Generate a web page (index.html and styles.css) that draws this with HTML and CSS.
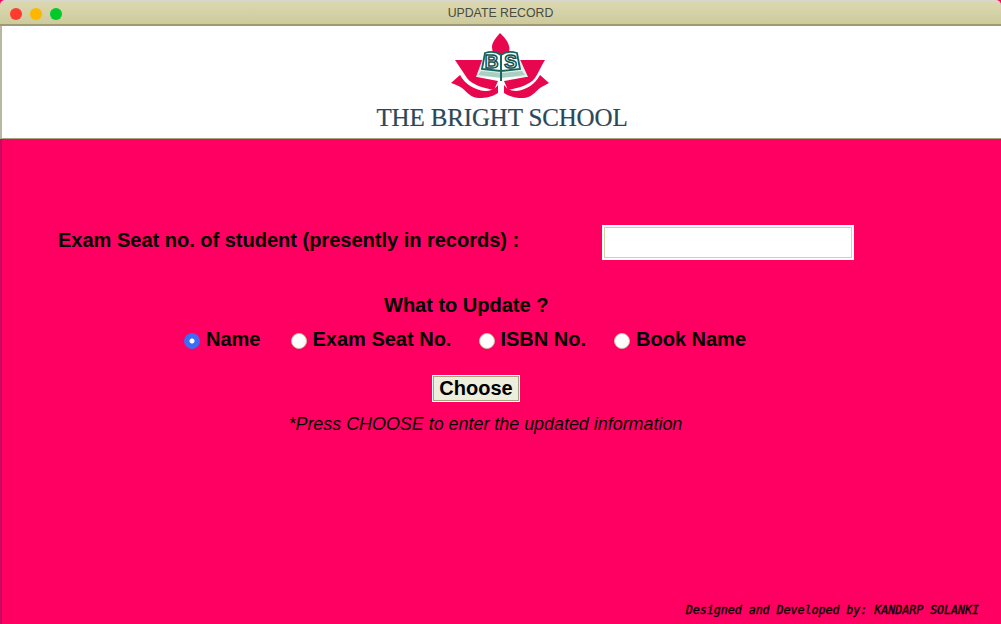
FILE: index.html
```html
<!DOCTYPE html>
<html lang="en">

<head>
    <meta charset="UTF-8">
    <meta name="viewport" content="width=device-width, initial-scale=1.0">
    <title>Update Record</title>
    <link rel="stylesheet" href="styles.css">
</head>

<body>
    <div class="titlebar">
        <div class="traffic">
            <span class="light red"></span>
            <span class="light yellow"></span>
            <span class="light green"></span>
        </div>
        <div class="title-text">UPDATE RECORD</div>
    </div>

    <header class="banner">
        <svg class="logo-mark" width="102" height="68" viewBox="450 32 102 68">
            <path fill="#e8064f" d="M500 33 C496 38 492 42 492 47 C492 50 493 52 494 54 L508 54 C509 52 510 49 509 46 C508 41 504 37 500 33 Z" />
            <path fill="#e8064f" d="M455 60 L483 60 L477 77 L498 81 L494 90 C484 88 472 85 467 78 C463 72 459 66 455 60 Z" />
            <path fill="#e8064f" d="M545 60 L519 60 L526 77 L504 81 L508 90 C518 88 530 85 535 78 C539 72 541 66 545 60 Z" />
            <path fill="#e8064f" d="M451 83 L460 75 C465 84 474 90 485 91 C490 91 495 89 498 85 L498 93 C492 97 486 98 479 98 C471 98 467 92 462 88 C459 86 455 84 451 83 Z" />
            <path fill="#e8064f" d="M549 83 L540 75 C535 84 527 90 516 91 C511 91 507 89 504 85 L504 93 C510 97 516 98 523 98 C531 98 535 92 540 88 C543 86 547 84 549 83 Z" />
            <path fill="#e4f1ea" d="M484 55 L518 55 L528 77 L476 77 Z" />
            <path fill="#ffffff" stroke="#17655e" stroke-width="1.8" d="M485 53 C491 51 497 52 501 55 C505 52 511 51 517 53 L520 69 L501 71 L482 69 Z" />
            <path fill="#a9cfc2" d="M481 71 L501 73 L522 71 L525 75 L501 78 L478 75 Z" />
            <path stroke="#17655e" stroke-width="2" fill="none" d="M501 55 L501 81" />
            <text class="logo-letters" x="491.5" y="68" text-anchor="middle">B</text>
            <text class="logo-letters" x="510.5" y="68" text-anchor="middle">S</text>
        </svg>
        <div class="school-name">THE BRIGHT SCHOOL</div>
    </header>

    <main class="content">
        <form class="update-form">
            <div class="seat-row">
                <label class="seat-label" for="seat">Exam Seat no. of student (presently in records) :</label>
                <div class="input-frame">
                    <input type="text" id="seat" name="seat" autocomplete="off">
                </div>
            </div>

            <div class="what-title">What to Update ?</div>

            <div class="radio-row">
                <label class="radio-item first"><input type="radio" name="field" checked>Name</label>
                <label class="radio-item"><input type="radio" name="field">Exam Seat No.</label>
                <label class="radio-item"><input type="radio" name="field">ISBN No.</label>
                <label class="radio-item"><input type="radio" name="field">Book Name</label>
            </div>

            <button class="choose-btn" type="button">Choose</button>

            <p class="note">*Press CHOOSE to enter the updated information</p>
        </form>

        <div class="credit">Designed and Developed by: KANDARP SOLANKI</div>
    </main>
</body>

</html>
```

FILE: styles.css
```css
* {
    margin: 0;
    padding: 0;
    box-sizing: border-box;
}

html,
body {
    height: 100%;
}

body {
    display: flex;
    flex-direction: column;
    height: 624px;
    overflow: hidden;
    font-family: 'Liberation Sans', Arial, sans-serif;
    background-color: #ff0062;
    color: #000000;
}

.titlebar {
    position: relative;
    height: 26px;
    flex-shrink: 0;
    display: flex;
    align-items: center;
    justify-content: center;
    background: linear-gradient(#dcd9b2, #cdca9c);
    border-top: 1px solid #d8d8d0;
    border-bottom: 2px solid #a09a72;
    border-radius: 5px 5px 0 0;
}

.traffic {
    position: absolute;
    left: 10px;
    top: 7px;
    display: flex;
    gap: 8px;
}

.light {
    width: 12px;
    height: 12px;
    border-radius: 50%;
}

.red {
    background-color: #fe3b30;
}

.yellow {
    background-color: #fdb700;
}

.green {
    background-color: #00c92a;
}

.title-text {
    font-size: 12.3px;
    color: #4a4a40;
}

.banner {
    height: 113px;
    flex-shrink: 0;
    display: flex;
    flex-direction: column;
    align-items: center;
    background-color: #ffffff;
    border-left: 2px solid #b8b8a0;
    border-bottom: 1px solid #a8a080;
}

.logo-mark {
    display: block;
    margin-top: 6px;
    margin-right: 2px;
}

.logo-letters {
    font-family: 'Liberation Sans', Arial, sans-serif;
    font-size: 19px;
    font-weight: bold;
    fill: #f2f8f5;
    stroke: #14524c;
    stroke-width: 1.5px;
}

.school-name {
    margin-top: 3px;
    margin-left: 1px;
    font-family: 'Liberation Serif', 'Times New Roman', serif;
    font-size: 25px;
    line-height: 30px;
    letter-spacing: -0.16px;
    color: #2b4858;
    -webkit-text-stroke: 0.2px #2b4858;
    white-space: nowrap;
}

.content {
    position: relative;
    flex: 1;
    box-shadow: inset 2px 0 0 #c80a5c;
}

.update-form {
    display: flex;
    flex-direction: column;
    align-items: flex-start;
    padding-top: 86px;
    font-weight: bold;
    font-size: 20px;
}

.seat-row {
    display: flex;
    align-items: center;
    padding-left: 58px;
}

.seat-label {
    width: 544px;
    margin-bottom: 4px;
}

.input-frame {
    width: 252px;
    height: 35px;
    padding: 2px;
    background-color: #ffffff;
}

.input-frame input {
    display: block;
    width: 100%;
    height: 100%;
    border: 1px solid #d2cfa9;
    background-color: #ffffff;
    outline: none;
}

.what-title {
    margin-top: 34px;
    margin-left: 384px;
    line-height: 22px;
}

.radio-row {
    display: flex;
    margin-top: 12px;
    margin-left: 184px;
    gap: 27px;
}

.radio-item {
    display: flex;
    align-items: center;
    gap: 6px;
    line-height: 22px;
}

.radio-item:nth-child(2),
.radio-item:nth-child(3) {
    gap: 5px;
    margin-right: 1px;
}

.radio-item.first {
    margin-right: 4px;
}

.radio-item input {
    appearance: none;
    width: 16px;
    height: 16px;
    margin-top: 4px;
    border-radius: 50%;
    background-color: #ffffff;
    border: 1px solid #c8c4a0;
}

.radio-item input:checked {
    background: radial-gradient(circle, #ffffff 0 2px, #3b6df6 3px);
    border-color: #3b6df6;
}

.choose-btn {
    margin-top: 26px;
    margin-left: 433px;
    width: 86px;
    height: 25px;
    font-family: 'Liberation Sans', Arial, sans-serif;
    font-size: 20px;
    font-weight: bold;
    line-height: 23px;
    color: #000000;
    background-color: #eeeedc;
    border: 1px solid #a8a480;
    box-shadow: 0 0 0 1px #ffffff;
    cursor: pointer;
}

.note {
    margin-top: 12px;
    margin-left: 288.5px;
    font-size: 17.9px;
    line-height: 22px;
    font-weight: normal;
    font-style: italic;
}

.credit {
    position: absolute;
    right: 22px;
    bottom: 7px;
    font-family: 'DejaVu Sans Mono', monospace;
    font-size: 11.6px;
    font-style: italic;
    -webkit-text-stroke: 0.35px #000000;
    white-space: nowrap;
}
```
